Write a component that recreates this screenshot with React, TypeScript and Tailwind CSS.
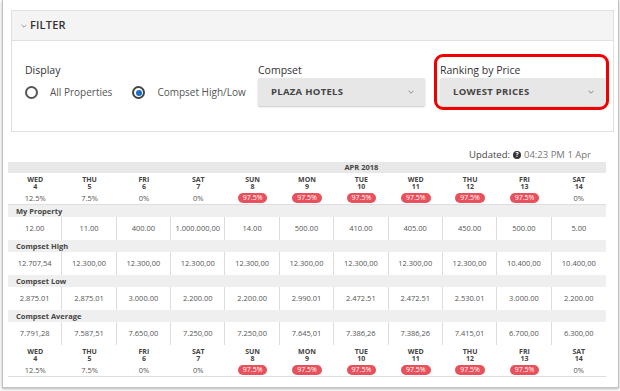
const days = [
  { d: 'WED', n: '4', p: '12.5%', hot: false },
  { d: 'THU', n: '5', p: '7.5%', hot: false },
  { d: 'FRI', n: '6', p: '0%', hot: false },
  { d: 'SAT', n: '7', p: '0%', hot: false },
  { d: 'SUN', n: '8', p: '97.5%', hot: true },
  { d: 'MON', n: '9', p: '97.5%', hot: true },
  { d: 'TUE', n: '10', p: '97.5%', hot: true },
  { d: 'WED', n: '11', p: '97.5%', hot: true },
  { d: 'THU', n: '12', p: '97.5%', hot: true },
  { d: 'FRI', n: '13', p: '97.5%', hot: true },
  { d: 'SAT', n: '14', p: '0%', hot: false },
];

const rows = [
  {
    label: 'My Property',
    values: ['12.00', '11.00', '400.00', '1.000.000,00', '14.00', '500.00', '410.00', '405.00', '450.00', '500.00', '5.00'],
  },
  {
    label: 'Compset High',
    values: ['12.707,54', '12.300,00', '12.300,00', '12.300,00', '12.300,00', '12.300,00', '12.300,00', '12.300,00', '12.300,00', '10.400,00', '10.400,00'],
  },
  {
    label: 'Compset Low',
    values: ['2.875.01', '2.875.01', '3.000.00', '2.200.00', '2.200.00', '2.990.01', '2.472.51', '2.472.51', '2.530.01', '3.000.00', '2.200.00'],
  },
  {
    label: 'Compset Average',
    values: ['7.791,28', '7.587,51', '7.650,00', '7.250,00', '7.250,00', '7.645,01', '7.386,26', '7.386,26', '7.415,01', '6.700,00', '6.300,00'],
  },
];

const Chevron = ({ className }: { className?: string }) => (
  <svg viewBox="0 0 10 6" className={className} fill="none" stroke="currentColor" strokeWidth="1.2">
    <path d="M1 1l4 4 4-4" />
  </svg>
);

const DayHeader = () => (
  <div className="grid grid-cols-11 h-[32px] border-b border-[#dedede]">
    {days.map((day, i) => (
      <div key={i} className="flex flex-col items-center pt-[3px]">
        <span className="text-[7px] leading-[7px] font-bold text-[#444] text-center whitespace-pre-line">
          {`${day.d}\n${day.n}`}
        </span>
        {day.hot ? (
          <span className="mt-[3px] px-[5px] h-[10px] rounded-full bg-[#e8505b] text-white text-[7px] leading-[10px]">
            {day.p}
          </span>
        ) : (
          <span className="mt-[4px] text-[7.5px] leading-[9px] text-[#555]">{day.p}</span>
        )}
      </div>
    ))}
  </div>
);

const Dropdown = ({ text }: { text: string }) => (
  <div className="h-[28px] bg-[#e7e7e7] rounded-[2px] shadow-[0_1px_2px_rgba(0,0,0,0.22)] flex items-center justify-between pl-[13px] pr-[11px]">
    <span className="text-[9.5px] font-bold tracking-[0.3px] text-[#444]">{text}</span>
    <Chevron className="w-[6px] h-[4px] text-[#666]" />
  </div>
);

export default function App() {
  return (
    <div className="min-h-screen bg-white font-['Open_Sans',sans-serif]">
      <div className="ml-[2px] w-[617px] h-[388px] bg-white border-x border-b border-[#c2c2c2] shadow-[0_1px_3px_rgba(0,0,0,0.3)] pt-[10px]">
        {/* filter */}
        <div className="ml-[8px] w-[603px] border border-[#e0e0e0]">
          <div className="h-[30px] bg-[#f4f4f4] border-b border-[#e0e0e0] flex items-center pl-[9px] gap-[3px]">
            <Chevron className="w-[6px] h-[4px] text-[#777]" />
            <span className="text-[11px] font-semibold text-[#333] tracking-[0.2px]">FILTER</span>
          </div>
          <div className="h-[90px] flex pl-[13px] pt-[22px]">
            <div className="w-[233px]">
              <div className="text-[10.5px] text-[#333] leading-[14px]">Display</div>
              <div className="mt-[8px] flex items-center text-[10px] text-[#555]">
                <span className="w-[13px] h-[13px] rounded-full border-2 border-[#555]" />
                <span className="ml-[12px]">All Properties</span>
                <span className="ml-[20px] w-[13px] h-[13px] rounded-full border-2 border-[#444] flex items-center justify-center">
                  <span className="w-[6px] h-[6px] rounded-full bg-[#1a6fc4]" />
                </span>
                <span className="ml-[12px]">Compset High/Low</span>
              </div>
            </div>
            <div className="w-[167px]">
              <div className="text-[10.5px] text-[#333] leading-[14px] mb-[1px]">Compset</div>
              <Dropdown text="PLAZA HOTELS" />
            </div>
            <div className="ml-[15px] w-[165px] relative">
              <div className="absolute -left-[6px] -right-[4px] -top-[9px] h-[56px] border-[3px] border-[#f20000] rounded-[9px]" />
              <div className="text-[10.5px] text-[#333] leading-[14px] mb-[1px]">Ranking by Price</div>
              <Dropdown text="LOWEST PRICES" />
            </div>
          </div>
        </div>

        {/* updated */}
        <div className="mt-[17px] ml-[5px] w-[598px] flex justify-end items-center pr-[15px] h-[12px] text-[9.5px]">
          <span className="text-[#444]">Updated:</span>
          <span className="ml-[3px] w-[8px] h-[8px] rounded-full bg-[#333] text-white text-[6.5px] font-bold leading-[8px] text-center">?</span>
          <span className="ml-[3px] text-[#777]">04:23 PM 1 Apr</span>
        </div>

        {/* table */}
        <div className="ml-[5px] w-[598px] mt-[1px]">
          <div className="grid grid-cols-11 h-[11px] bg-[#e8e8e8]">
            <div className="col-start-7 text-center text-[7.5px] font-bold text-[#444] leading-[11px]">APR 2018</div>
          </div>
          <DayHeader />
          {rows.map((row) => (
            <div key={row.label}>
              <div className="h-[12px] bg-[#efefef] pl-[8px] text-[7.5px] font-bold text-[#444] leading-[12px]">{row.label}</div>
              <div className="grid grid-cols-11 h-[23px] bg-white">
                {row.values.map((v, i) => (
                  <div
                    key={i}
                    className={`flex items-center justify-center text-[7.5px] text-[#555] ${i < 10 ? 'border-r border-[#dcdcdc]' : ''}`}
                  >
                    {v}
                  </div>
                ))}
              </div>
            </div>
          ))}
          <DayHeader />
        </div>
      </div>
    </div>
  );
}
